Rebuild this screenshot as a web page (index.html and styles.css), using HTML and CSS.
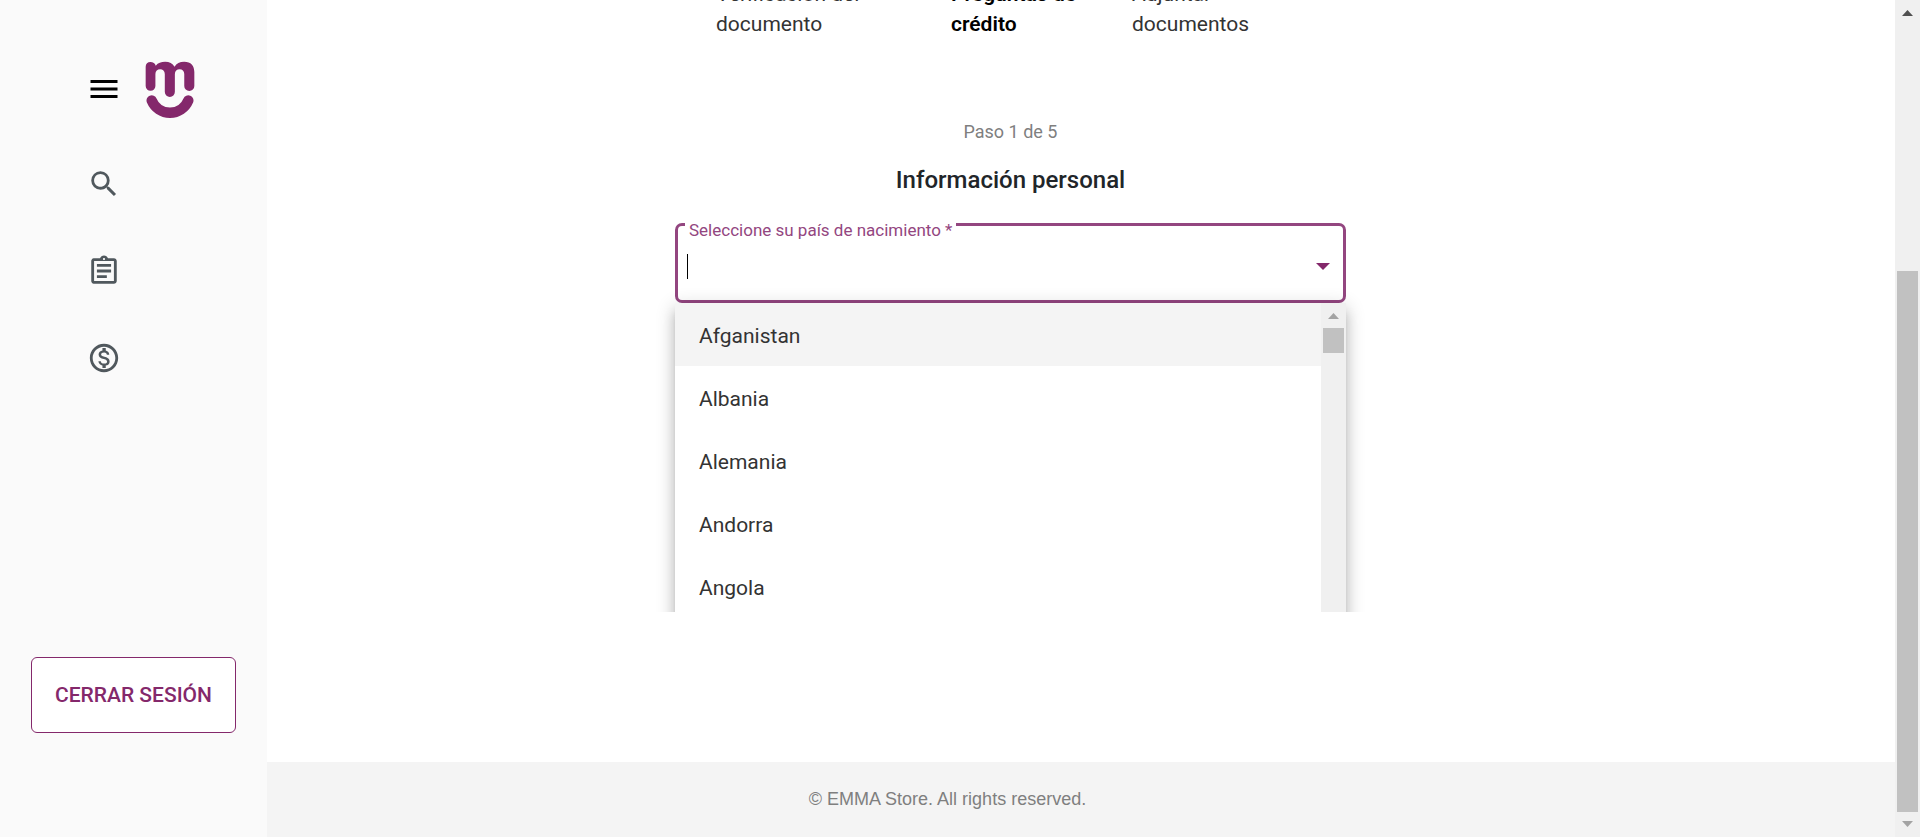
FILE: index.html
```html
<!DOCTYPE html>
<html lang="es">
<head>
<meta charset="utf-8">
<title>EMMA Store</title>
<link rel="stylesheet" href="styles.css">
</head>
<body>
<div class="app">
  <aside class="sidebar">
    <div class="brand">
      <button class="icon-button" type="button" aria-label="Menú">
        <svg class="menu-icon" viewBox="0 0 24 24"><path d="M3 18h18v-2H3v2zm0-5h18v-2H3v2zm0-7v2h18V6H3z"/></svg>
      </button>
      <svg class="logo" viewBox="31 20 149 171" aria-hidden="true">
        <path class="logo-mark" d="M33 36C33 27 39 22 47 22C55 22 61 26 63 33C70 24 79 21 91 21C104 21 113 26 119 36C125 26 134 21 148 21C168 21 178 33 178 52V93.500A15 15 0 0 1 148 93.500V58C148 49 142 44 134 44S120 49 120 58V111A15 15 0 0 1 90 111V58C90 49 84 44 76 44S62 49 62 58V93.500A14.500 14.500 0 0 1 33 93.500Z"/>
        <path class="logo-smile" d="M51 137A59 59 0 0 0 160 137"/>
      </svg>
    </div>
    <nav class="nav">
      <a class="nav-link" href="#" aria-label="Buscar">
        <svg class="nav-icon" viewBox="0 0 24 24"><path d="M15.5 14h-.79l-.28-.27A6.471 6.471 0 0 0 16 9.5 6.5 6.5 0 1 0 9.5 16c1.61 0 3.09-.59 4.23-1.57l.27.28v.79l5 4.99L20.49 19l-4.99-5zm-6 0C7.01 14 5 11.99 5 9.5S7.01 5 9.5 5 14 7.01 14 9.5 11.99 14 9.5 14z"/></svg>
      </a>
      <a class="nav-link" href="#" aria-label="Solicitudes">
        <svg class="nav-icon" viewBox="0 0 24 24"><path d="M7 15h7v2H7zm0-4h10v2H7zm0-4h10v2H7zm12-4h-4.180C14.400 1.840 13.300 1 12 1c-1.300 0-2.400.84-2.820 2H5c-.14 0-.27.010-.4.040a2.008 2.008 0 0 0-1.440 1.190c-.1.230-.16.490-.16.770v14c0 .27.060.54.160.78s.25.450.43.640c.27.270.62.470 1.010.55.130.020.260.030.4.030h14c1.100 0 2-.9 2-2V5c0-1.100-.9-2-2-2zm-7-.25c.41 0 .75.340.75.750s-.34.750-.75.750-.75-.340-.75-.750.340-.75.750-.75zM19 19H5V5h14v14z"/></svg>
      </a>
      <a class="nav-link" href="#" aria-label="Pagos">
        <svg class="nav-icon" viewBox="0 0 24 24"><path d="M12 2C6.480 2 2 6.480 2 12s4.480 10 10 10 10-4.480 10-10S17.520 2 12 2zm0 18c-4.410 0-8-3.590-8-8s3.590-8 8-8 8 3.590 8 8-3.590 8-8 8zm.31-8.860c-1.770-.45-2.340-.94-2.340-1.670 0-.84.790-1.430 2.100-1.430 1.380 0 1.900.66 1.940 1.640h1.710c-.05-1.340-.87-2.570-2.490-2.970V5H10.900v1.690c-1.510.32-2.720 1.300-2.720 2.810 0 1.790 1.490 2.690 3.660 3.210 1.950.46 2.340 1.150 2.340 1.870 0 .53-.39 1.390-2.100 1.390-1.600 0-2.230-.72-2.320-1.640H8.040c.1 1.700 1.360 2.660 2.860 2.970V19h2.340v-1.670c1.520-.29 2.720-1.160 2.730-2.770-.01-2.200-1.900-2.960-3.660-3.420z"/></svg>
      </a>
    </nav>
    <button class="logout" type="button">CERRAR SESIÓN</button>
  </aside>

  <main class="main">
    <section class="form">
      <ol class="stepper">
        <li class="step">Verificación del<br>documento</li>
        <li class="step step-active">Preguntas de<br>crédito</li>
        <li class="step">Adjuntar<br>documentos</li>
      </ol>
      <p class="progress">Paso 1 de 5</p>
      <h1 class="title">Información personal</h1>
      <div class="field">
        <label class="field-label" for="country">Seleccione su país de nacimiento *</label>
        <span class="caret"></span>
        <input class="field-input" id="country" type="text" role="combobox" aria-expanded="true" aria-controls="countries">
        <svg class="field-arrow" viewBox="0 0 14 7"><path d="M0 0h14l-7 7z"/></svg>
      </div>
      <div class="dropdown">
        <div class="panel">
          <ul class="options" id="countries" role="listbox">
            <li class="option option-active" role="option">Afganistan</li>
            <li class="option" role="option">Albania</li>
            <li class="option" role="option">Alemania</li>
            <li class="option" role="option">Andorra</li>
            <li class="option" role="option">Angola</li>
          </ul>
          <div class="scrollbar">
            <svg class="scroll-arrow" viewBox="0 0 11 6"><path d="M0 6h11L5.500 0z"/></svg>
            <div class="panel-thumb"></div>
          </div>
        </div>
      </div>
    </section>
  </main>

  <footer class="footer">© EMMA Store. All rights reserved.</footer>

  <div class="scrollbar page-scrollbar">
    <svg class="scroll-arrow scroll-arrow-dark" viewBox="0 0 11 6"><path d="M0 6h11L5.500 0z"/></svg>
    <div class="page-thumb"></div>
    <svg class="scroll-arrow" viewBox="0 0 11 6"><path d="M0 0h11L5.500 6z"/></svg>
  </div>
</div>
</body>
</html>
```
FILE: styles.css
```css
* {
  box-sizing: border-box;
}

body {
  margin: 0;
  font-family: Roboto, "Liberation Sans", sans-serif;
  font-size: 21px;
  color: #212529;
  background: #fff;
}

ol, ul, p, h1 {
  margin: 0;
  padding: 0;
  list-style: none;
}

.app {
  display: grid;
  grid-template-columns: 267px 1fr 25px;
  grid-template-rows: 1fr auto;
  height: 100vh;
  overflow: hidden;
}

/* Sidebar */
.sidebar {
  grid-column: 1;
  grid-row: 1 / 3;
  z-index: 1;
  display: flex;
  flex-direction: column;
  padding: 61px 31px 104px;
  background: #fafafa;
}

.brand {
  display: flex;
  align-items: flex-start;
  gap: 23px;
  padding-left: 55px;
}

.icon-button {
  padding: 10px 0 0;
  border: 0;
  background: none;
}

.menu-icon {
  display: block;
  width: 36px;
  height: 36px;
}

.logo {
  width: 50px;
  height: 58px;
}

.logo-mark {
  fill: #84286b;
}

.logo-smile {
  fill: none;
  stroke: #84286b;
  stroke-width: 31;
  stroke-linecap: round;
}

.nav {
  display: flex;
  flex-direction: column;
  gap: 53px;
  padding: 48px 0 0 56px;
}

.nav-icon {
  display: block;
  width: 34px;
  height: 34px;
  fill: #50585d;
}

.nav-link {
  width: 34px;
}

.logout {
  margin-top: auto;
  height: 76px;
  border: 1px solid #84286b;
  border-radius: 6px;
  background: #fff;
  color: #84286b;
  font: 500 21px/24px Roboto, "Liberation Sans", sans-serif;
}

/* Form */
.main {
  grid-column: 2;
  grid-row: 1;
  display: flex;
  justify-content: center;
  padding-right: 141px;
}

.form {
  width: 671px;
}

.stepper {
  display: grid;
  grid-template-columns: 235px 181px auto;
  align-content: end;
  height: 39px;
  padding-left: 41px;
}

.step {
  line-height: 30px;
  color: #333;
}

.step-active {
  font-weight: 600;
  color: #000;
}

.progress {
  padding-top: 81px;
  font-size: 18px;
  line-height: 24px;
  text-align: center;
  color: #7f7f7f;
}

.title {
  padding: 20px 0 27px;
  font-size: 24px;
  font-weight: 500;
  line-height: 32px;
  text-align: center;
}

.field {
  position: relative;
  display: flex;
  align-items: center;
  height: 80px;
  padding: 6px 13px 0 9px;
  border: 3px solid #934680;
  border-radius: 7px;
}

.field-label {
  position: absolute;
  top: -5px;
  left: 7px;
  padding: 0 4px;
  background: #fff;
  font-size: 17px;
  line-height: 18px;
  color: #934680;
}

.caret {
  width: 1px;
  height: 25px;
  background: #000;
}

.field-input {
  flex: 1;
  height: 30px;
  border: 0;
  outline: 0;
  background: none;
  font: inherit;
}

.field-arrow {
  width: 14px;
  height: 7px;
  fill: #84286b;
}

/* Options panel */
.dropdown {
  height: 309px;
  clip-path: inset(-30px -30px 0 -30px);
}

.panel {
  display: flex;
  height: 380px;
  border-radius: 5px;
  background: #fff;
  box-shadow: 0 6px 6px -4px rgba(0, 0, 0, .2), 0 10px 12px 1px rgba(0, 0, 0, .14), 0 4px 18px 3px rgba(0, 0, 0, .14);
}

.options {
  flex: 1;
}

.option {
  height: 63px;
  padding: 1px 24px 0;
  line-height: 62px;
  padding-top: 2px;
  color: #333;
}

.option-active {
  background: #f4f4f4;
}

.scrollbar {
  display: flex;
  flex-direction: column;
  align-items: center;
  width: 25px;
  padding: 10px 2px;
  gap: 9px;
  background: #f0f0f0;
}

.scroll-arrow {
  width: 11px;
  height: 6px;
  fill: #a3a3a3;
}

.scroll-arrow-dark {
  fill: #505050;
}

.panel-thumb {
  width: 21px;
  height: 25px;
  background: #c1c1c1;
}

/* Footer and page scrollbar */
.footer {
  grid-column: 1 / 3;
  grid-row: 2;
  padding: 24px 0;
  background: #f4f4f4;
  font: 18px/27px "Liberation Sans", Arial, sans-serif;
  text-align: center;
  color: #7f7f7f;
}

.page-scrollbar {
  grid-column: 3;
  grid-row: 1 / 3;
}

.page-thumb {
  width: 21px;
  flex: 1;
  margin-top: 246px;
  background: #c1c1c1;
}
```
